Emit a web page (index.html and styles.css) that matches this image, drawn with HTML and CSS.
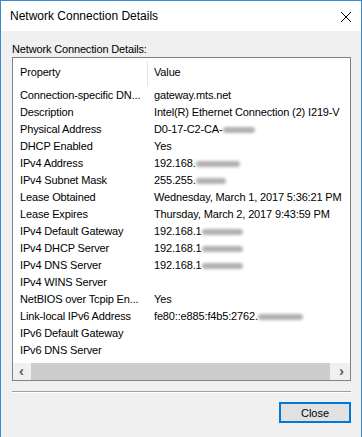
FILE: index.html
```html
<!DOCTYPE html>
<html lang="en">
<head>
  <meta charset="UTF-8" />
  <title>Network Connection Details</title>
  <link rel="stylesheet" href="styles.css">
</head>
<body>
  <div class="window">
    <div class="titlebar">
      <span class="title">Network Connection Details</span>
      <svg class="close-x" width="12" height="12" viewBox="0 0 12 12">
        <path d="M1 1 L11 11 M11 1 L1 11" stroke="#000" stroke-width="1" fill="none"/>
      </svg>
    </div>

    <div class="content">
      <div class="label">Network Connection Details:</div>

      <div class="listbox">
        <div class="list-header">
          <div class="col-name">Property</div>
          <div class="col-sep"></div>
          <div class="col-value">Value</div>
        </div>

        <div class="rows">
          <div class="row"><div class="name">Connection-specific DN...</div><div class="value">gateway.mts.net</div></div>
          <div class="row"><div class="name">Description</div><div class="value">Intel(R) Ethernet Connection (2) I219-V</div></div>
          <div class="row"><div class="name">Physical Address</div><div class="value">D0-17-C2-CA-<span class="smear w-mac"></span></div></div>
          <div class="row"><div class="name">DHCP Enabled</div><div class="value">Yes</div></div>
          <div class="row"><div class="name">IPv4 Address</div><div class="value">192.168.<span class="smear w-ip"></span></div></div>
          <div class="row"><div class="name">IPv4 Subnet Mask</div><div class="value">255.255.<span class="smear w-mask"></span></div></div>
          <div class="row"><div class="name">Lease Obtained</div><div class="value">Wednesday, March 1, 2017 5:36:21 PM</div></div>
          <div class="row"><div class="name">Lease Expires</div><div class="value">Thursday, March 2, 2017 9:43:59 PM</div></div>
          <div class="row"><div class="name">IPv4 Default Gateway</div><div class="value">192.168.1<span class="smear w-ip1"></span></div></div>
          <div class="row"><div class="name">IPv4 DHCP Server</div><div class="value">192.168.1<span class="smear w-ip1"></span></div></div>
          <div class="row"><div class="name">IPv4 DNS Server</div><div class="value">192.168.1<span class="smear w-ip1"></span></div></div>
          <div class="row"><div class="name">IPv4 WINS Server</div><div class="value"></div></div>
          <div class="row"><div class="name">NetBIOS over Tcpip En...</div><div class="value">Yes</div></div>
          <div class="row"><div class="name">Link-local IPv6 Address</div><div class="value">fe80::e885:f4b5:2762.<span class="smear w-v6"></span></div></div>
          <div class="row"><div class="name">IPv6 Default Gateway</div><div class="value"></div></div>
          <div class="row"><div class="name">IPv6 DNS Server</div><div class="value"></div></div>
        </div>

        <div class="hscroll">
          <div class="arrow">&lsaquo;</div>
          <div class="track"><div class="thumb"></div></div>
          <div class="arrow">&rsaquo;</div>
        </div>
      </div>

      <div class="separator"></div>

      <div class="buttons">
        <button class="btn-close">Close</button>
      </div>
    </div>
  </div>
</body>
</html>
```

FILE: styles.css
```css
body {
  margin: 0;
  padding: 0;
  font-family: "Liberation Sans", Arial, sans-serif;
  font-size: 11px;
  letter-spacing: -0.15px;
  color: #000;
  background-color: #f0f0f0;
}
.window {
  width: 362px;
  height: 437px;
  box-sizing: border-box;
  border: 1px solid #3a8ad2;
  border-bottom: none;
  display: flex;
  flex-direction: column;
}
.titlebar {
  height: 30px;
  background-color: #fff;
  display: flex;
  align-items: center;
  justify-content: space-between;
  padding: 0 9px 0 9px;
}
.title {
  font-size: 12px;
  letter-spacing: 0;
}
.close-x {
  display: block;
  margin-top: 1px;
}
.content {
  flex: 1;
  background-color: #f0f0f0;
  padding: 11px 10px 0 11px;
}
.label {
  height: 15px;
  line-height: 15px;
}
.listbox {
  width: 339px;
  height: 324px;
  box-sizing: border-box;
  border: 1px solid #828282;
  background-color: #fff;
  display: flex;
  flex-direction: column;
}
.list-header {
  height: 28px;
  display: flex;
  align-items: center;
}
.col-name {
  width: 127px;
  padding-left: 7px;
}
.col-sep {
  width: 1px;
  align-self: stretch;
  margin: 3px 0 0 0;
  background-color: #e5e5e5;
}
.col-value {
  padding-left: 6px;
}
.rows {
  flex: 1;
}
.row {
  height: 17px;
  display: flex;
  align-items: center;
  white-space: nowrap;
}
.name {
  width: 127px;
  padding: 0 7px;
  overflow: hidden;
}
.value {
  padding-left: 0;
}
.smear {
  display: inline-block;
  height: 6px;
  vertical-align: middle;
  border-radius: 3px;
  background-color: #b0b0b0;
  filter: blur(1.8px);
}
.w-mac { width: 32px; }
.w-ip { width: 44px; }
.w-mask { width: 30px; }
.w-ip1 { width: 41px; }
.w-v6 { width: 45px; }
.hscroll {
  height: 17px;
  display: flex;
  background-color: #f0f0f0;
}
.arrow {
  width: 17px;
  text-align: center;
  line-height: 16px;
  font-size: 15px;
  font-weight: bold;
  color: #606060;
}
.track {
  flex: 1;
  padding: 0 1px;
}
.thumb {
  height: 17px;
  width: 299px;
  background-color: #cdcdcd;
}
.separator {
  width: 339px;
  margin-top: 10px;
  border-top: 1px solid #a0a0a0;
  border-bottom: 1px solid #fff;
  box-sizing: border-box;
  height: 2px;
}
.buttons {
  width: 339px;
  display: flex;
  justify-content: flex-end;
  margin-top: 9px;
}
.btn-close {
  width: 72px;
  height: 21px;
  font-family: "Liberation Sans", Arial, sans-serif;
  font-size: 11px;
  background-color: #e1e1e1;
  border: 1px solid #0078d7;
  box-shadow: inset 0 0 0 1px #0078d7;
  padding: 0;
}
```
